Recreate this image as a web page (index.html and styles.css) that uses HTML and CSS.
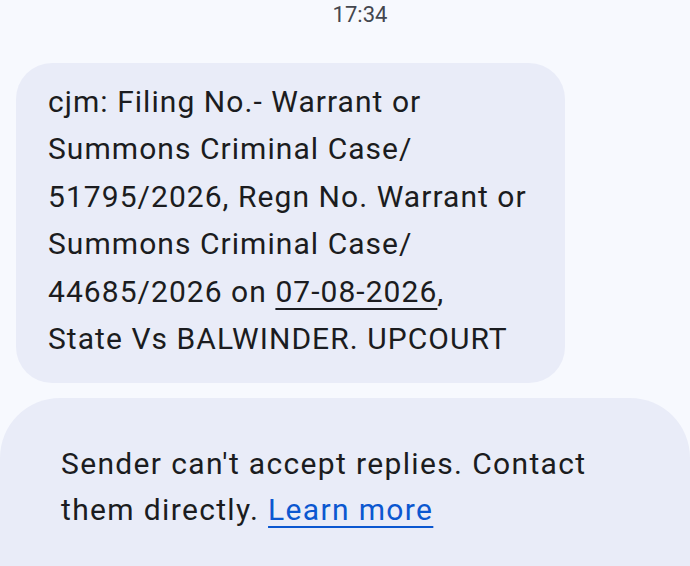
FILE: index.html
```html
<!DOCTYPE html>
<html>
<head>
<meta charset="utf-8">
<link rel="stylesheet" href="styles.css">
</head>
<body>
<div class="screen">
  <div class="time">17:34</div>
  <div class="bubble">cjm: Filing No.- Warrant or<br>Summons Criminal Case/<br>51795/2026, Regn No. Warrant or<br>Summons Criminal Case/<br>44685/2026 on <span class="date">07-08-2026</span>,<br>State Vs BALWINDER. UPCOURT</div>
  <div class="panel">
    <p class="notice">Sender can't accept replies. Contact<br>them directly. <a class="link" href="#">Learn more</a></p>
  </div>
</div>
</body>
</html>
```
FILE: styles.css
```css
html, body {
  margin: 0;
  padding: 0;
  background: #f7f9fe;
}
.screen {
  width: 690px;
  height: 566px;
  overflow: hidden;
  display: flex;
  flex-direction: column;
  font-family: Roboto, "Noto Sans", sans-serif;
  color: #1b1c20;
}
.time {
  text-align: center;
  font-size: 22px;
  line-height: 30px;
  color: #44474e;
  padding-left: 30px;
}
.bubble {
  margin: 33px 0 0 16px;
  width: 549px;
  box-sizing: border-box;
  background: #e9ecf8;
  border-radius: 36px;
  padding: 15px 20px 21px 32px;
  font-size: 30px;
  line-height: 47.4px;
  letter-spacing: 1.05px;
}
.date {
  text-decoration: underline;
  text-decoration-thickness: 2px;
  text-underline-offset: 6px;
}
.panel {
  margin-top: 15px;
  flex: 1;
  background: #e9ecf8;
  border-radius: 60px 60px 0 0;
  padding: 43px 0 0 61px;
}
.notice {
  margin: 0;
  font-size: 30px;
  line-height: 46px;
  letter-spacing: 1.35px;
}
.link {
  color: #0b57d0;
  text-decoration: underline;
  text-decoration-thickness: 2px;
  text-underline-offset: 6px;
}
```
